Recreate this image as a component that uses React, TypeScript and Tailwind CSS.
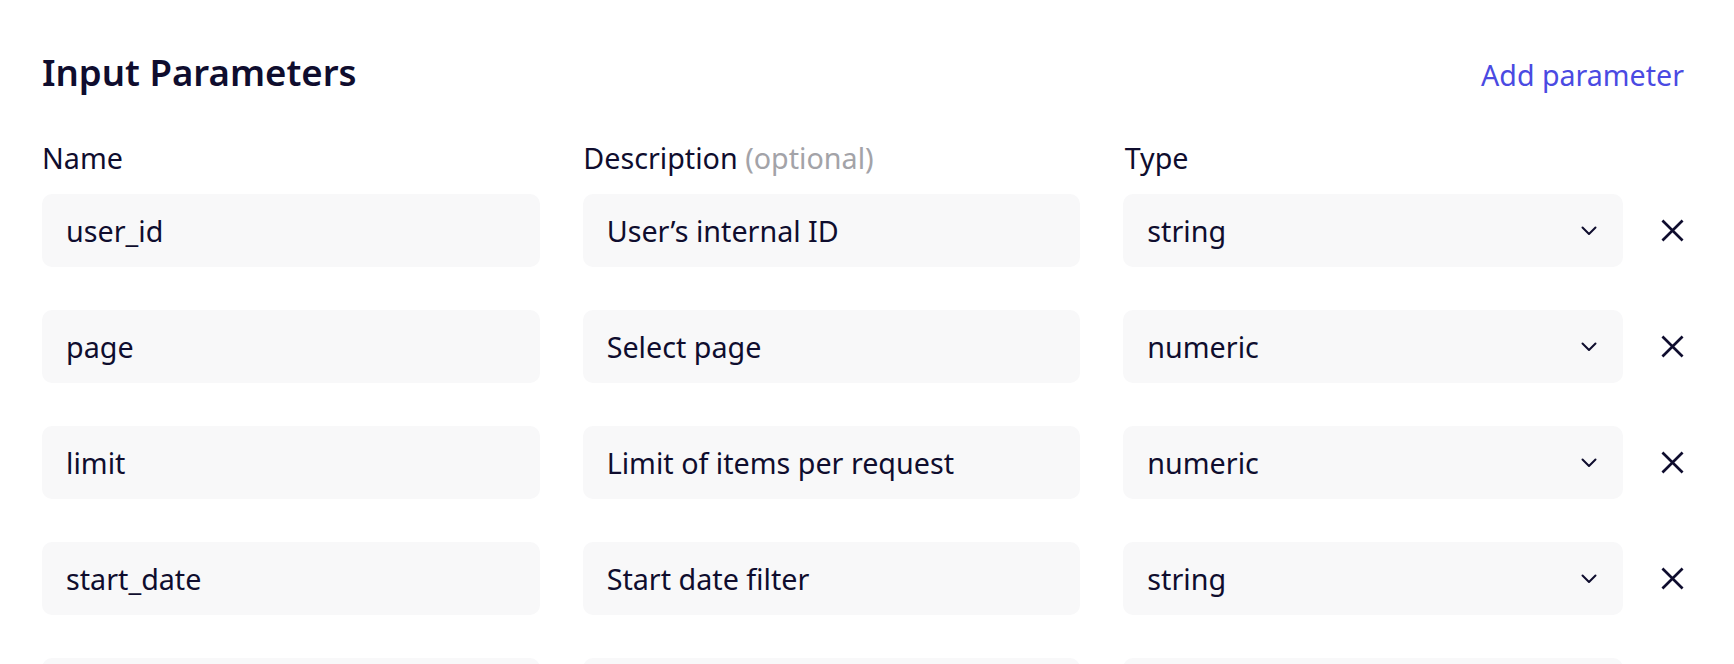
import React from "react";

const rows = [
  { name: "user_id", desc: "User\u2019s internal ID", type: "string" },
  { name: "page", desc: "Select page", type: "numeric" },
  { name: "limit", desc: "Limit of items per request", type: "numeric" },
  { name: "start_date", desc: "Start date filter", type: "string" },
  { name: "", desc: "", type: "" },
];

function Chevron() {
  return (
    <svg width="16" height="10" viewBox="0 0 16 10" fill="none" className="shrink-0">
      <path d="M1.5 1.5 L8 8 L14.5 1.5" stroke="#0f0d2e" strokeWidth="2" strokeLinecap="round" strokeLinejoin="round" />
    </svg>
  );
}

function XIcon() {
  return (
    <svg width="25" height="25" viewBox="0 0 24 24" fill="none">
      <path d="M1.5 1.5 L22.5 22.5 M22.5 1.5 L1.5 22.5" stroke="#0f0d2e" strokeWidth="2.8" />
    </svg>
  );
}

export default function App() {
  return (
    <div
      className="min-h-screen bg-white pl-[42px] pr-[50px] pt-[48px] text-[#0f0d2e]"
      style={{ fontFamily: '"Noto Sans", "Open Sans", sans-serif' }}
    >
      <div className="flex items-baseline justify-between">
        <h2 className="text-[36.6px] leading-[48px] font-semibold">Input Parameters</h2>
        <button className="text-[28.6px] leading-[38px] text-[#4a4ae2]">Add parameter</button>
      </div>

      <div className="mt-[43px] flex gap-[43px] text-[28.7px] leading-[38px]">
        <div className="flex-1">Name</div>
        <div className="flex-1">
          Description <span className="text-[#a3a3a8]">(optional)</span>
        </div>
        <div className="flex-1">Type</div>
        <div className="ml-[-5px] w-[23px] shrink-0" />
      </div>

      <div className="mt-[17px] flex flex-col gap-[43px]">
        {rows.map((r, i) => (
          <div key={i} className="flex items-center gap-[43px] text-[28.7px]">
            <div className="flex h-[73px] flex-1 items-center rounded-[10px] bg-[#f8f8f9] px-6">
              {r.name}
            </div>
            <div className="flex h-[73px] flex-1 items-center rounded-[10px] bg-[#f8f8f9] px-6">
              {r.desc}
            </div>
            <div className="flex h-[73px] flex-1 items-center justify-between rounded-[10px] bg-[#f8f8f9] pl-6 pr-[26px]">
              <span>{r.type}</span>
              <Chevron />
            </div>
            <div className="ml-[-5px] flex w-[23px] shrink-0 items-center justify-center">
              <XIcon />
            </div>
          </div>
        ))}
      </div>
    </div>
  );
}
